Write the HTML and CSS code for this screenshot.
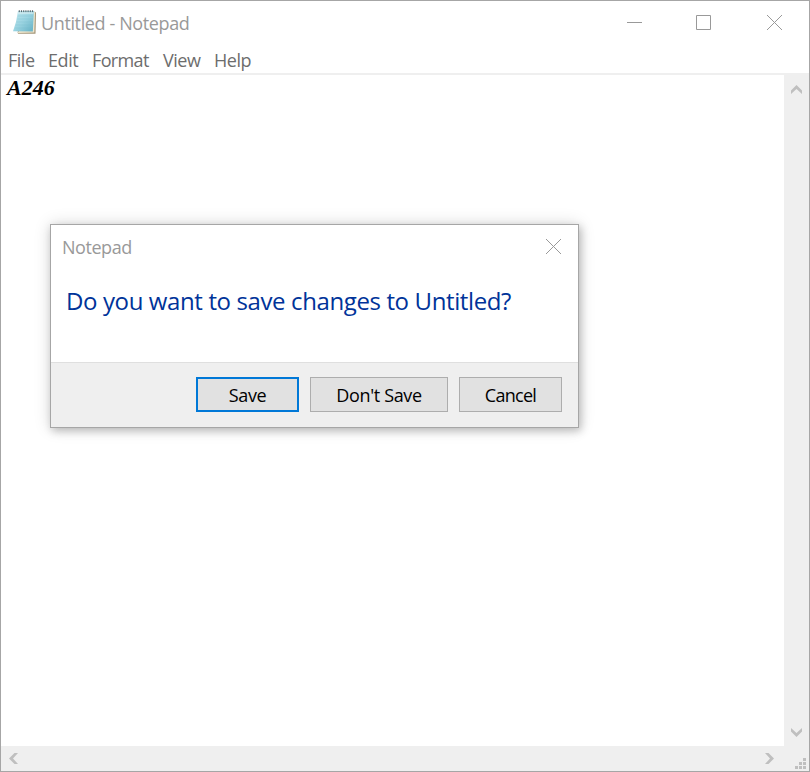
FILE: index.html
```html
<!DOCTYPE html>
<html lang="en">
<head>
<meta charset="utf-8">
<title>Untitled - Notepad</title>
<link rel="stylesheet" href="styles.css">
</head>
<body>
<main class="window">
  <header class="titlebar">
    <svg class="app-icon" width="24" height="26" viewBox="0 0 24 26">
      <defs>
        <linearGradient id="page" x1="0" y1="0" x2="1" y2="1">
          <stop offset="0" stop-color="#c3e8ef"/>
          <stop offset=".5" stop-color="#9bd4e1"/>
          <stop offset="1" stop-color="#62afc3"/>
        </linearGradient>
      </defs>
      <path d="M22 2.500 24 3.500 23.500 24.800H6L5.500 23Z" fill="#a39679"/>
      <path d="M21.500 2 23 3.500 22.300 23.400 5.500 24Z" fill="#efe6cd"/>
      <path d="M6 2H22L20.800 22.500 1 22.300Q4.600 13 6 2Z" fill="url(#page)"/>
      <path d="M6 7H21M5.300 10H21M4.600 13H21M3.800 16H21M3 19H20.500" stroke="#77bccd" stroke-width=".7" opacity=".4"/>
      <path d="M7.300 3.300V1.200M9.500 3.300V1.200M11.700 3.300V1.200M13.900 3.300V1.200M16.100 3.300V1.200M18.300 3.300V1.200M20.500 3.300V1.200" stroke="#59666b" stroke-width="1.100"/>
      <path d="M6 4H21.500" stroke="#e2f3f6" stroke-width="1"/>
    </svg>
    <h1 class="title">Untitled - Notepad</h1>
    <div class="controls">
      <svg width="15" height="15"><path d="M0 7.500H15"/></svg>
      <svg width="15" height="15"><path d="M.5 .5H14.500V14.500H.5Z"/></svg>
      <svg width="15" height="15"><path d="M0 0 15 15M15 0 0 15"/></svg>
    </div>
  </header>
  <nav class="menu"><span class="m-file">File</span><span class="m-edit">Edit</span><span class="m-format">Format</span><span class="m-view">View</span><span class="m-help">Help</span></nav>
  <section class="editor">
    <div class="text"><span>A246</span></div>
    <div class="vscroll">
      <svg width="11" height="9"><path d="M0 5.500 5.500 0 11 5.500V9L5.500 4 0 9Z"/></svg>
      <svg width="11" height="9"><path d="M0 3.500 5.500 9 11 3.500V0L5.500 5 0 0Z"/></svg>
    </div>
    <div class="hscroll">
      <svg width="9" height="11"><path d="M5.500 0 0 5.500 5.500 11H9L4 5.500 9 0Z"/></svg>
      <svg width="9" height="11"><path d="M3.500 0 9 5.500 3.500 11H0L5 5.500 0 0Z"/></svg>
    </div>
    <div class="corner">
      <svg width="11" height="11"><path d="M8 0h3v3H8ZM4 4h3v3H4ZM8 4h3v3H8ZM0 8h3v3H0ZM4 8h3v3H4ZM8 8h3v3H8Z"/></svg>
    </div>
  </section>
</main>
<div class="dialog" role="dialog">
  <div class="dialog-title">
    <span>Notepad</span>
    <svg width="15" height="15"><path d="M0 0 15 15M15 0 0 15"/></svg>
  </div>
  <p class="message"><span>Do you want to save changes to Untitled?</span></p>
  <div class="actions">
    <button class="btn primary"><span>Save</span></button>
    <button class="btn wide"><span>Don't Save</span></button>
    <button class="btn"><span>Cancel</span></button>
  </div>
</div>
</body>
</html>
```
FILE: styles.css
```css
* { box-sizing: border-box; }
body {
  margin: 0;
  background: #fff;
  font: 18px/24px "Open Sans", "Noto Sans", sans-serif;
  overflow: hidden;
}
svg { display: block; flex: none; }
.window {
  width: 810px;
  height: 772px;
  border: 1px solid #a6a6a6;
  display: flex;
  flex-direction: column;
}
.titlebar {
  height: 47px;
  padding: 8px 27px 0 11px;
  display: flex;
  align-items: flex-start;
}
.title {
  margin: 2px 0 0 5px;
  font-size: 18px;
  line-height: 24px;
  font-weight: 400;
  letter-spacing: -.38px;
  color: #999;
  white-space: nowrap;
}
.controls {
  margin: 6px 0 0 auto;
  display: flex;
  gap: 55px;
}
.controls svg, .dialog-title svg { fill: none; stroke: #999; stroke-width: 1; }
.controls svg:first-child { margin-right: -1px; }
.controls svg:last-child { margin-left: 1px; }
.menu {
  height: 27px;
  padding-left: 7px;
  border-bottom: 2px solid #efefef;
  color: #6d6d6d;
  display: flex;
  letter-spacing: -.5px;
}
.m-file { width: 40px; }
.m-edit { width: 44px; letter-spacing: -.4px; }
.m-format { width: 71px; letter-spacing: -.65px; }
.m-view { width: 51px; }
.editor {
  flex: 1;
  display: grid;
  grid-template: 1fr 25px / 1fr 25px;
}
.text {
  padding: 1px 0 0 6px;
  font: italic bold 22px/24px "Liberation Serif", serif;
}
.vscroll, .hscroll, .corner { background: #efefef; fill: #bfbfbf; }
.vscroll {
  padding: 10px 7px 9px;
  display: flex;
  flex-direction: column;
  justify-content: space-between;
}
.hscroll {
  padding: 7px 10px 7px 8px;
  display: flex;
  justify-content: space-between;
}
.corner {
  padding: 12px 3px 2px 11px;
}
.dialog {
  position: absolute;
  left: 50px;
  top: 224px;
  width: 529px;
  height: 204px;
  border: 1px solid #a6a6a6;
  background: #fff;
  box-shadow: 2px 3px 8px rgba(0, 0, 0, .22), 0 0 16px rgba(0, 0, 0, .14);
  display: flex;
  flex-direction: column;
}
.dialog-title {
  height: 47px;
  padding: 10px 17px 0 11px;
  display: flex;
  justify-content: space-between;
  color: #999;
  letter-spacing: -.45px;
}
.dialog-title svg { margin-top: 4px; }
.message {
  flex: 1;
  margin: 0;
  padding: 13px 0 0 15px;
  font-size: 24px;
  line-height: 32px;
  letter-spacing: -.38px;
  color: #039;
  white-space: nowrap;
}
.actions {
  height: 65px;
  flex: none;
  padding: 14px 16px 0;
  border-top: 1px solid #dfdfdf;
  background: #efefef;
  display: flex;
  justify-content: flex-end;
  gap: 11px;
}
.btn {
  width: 103px;
  height: 35px;
  padding: 1px 0 0;
  border: 1px solid #adadad;
  background: #e1e1e1;
  color: #000;
  font: inherit;
  letter-spacing: -.35px;
}
.btn:last-child { letter-spacing: -.7px; }
.wide { width: 138px; }
.primary { border: 2px solid #0078d7; }
```
